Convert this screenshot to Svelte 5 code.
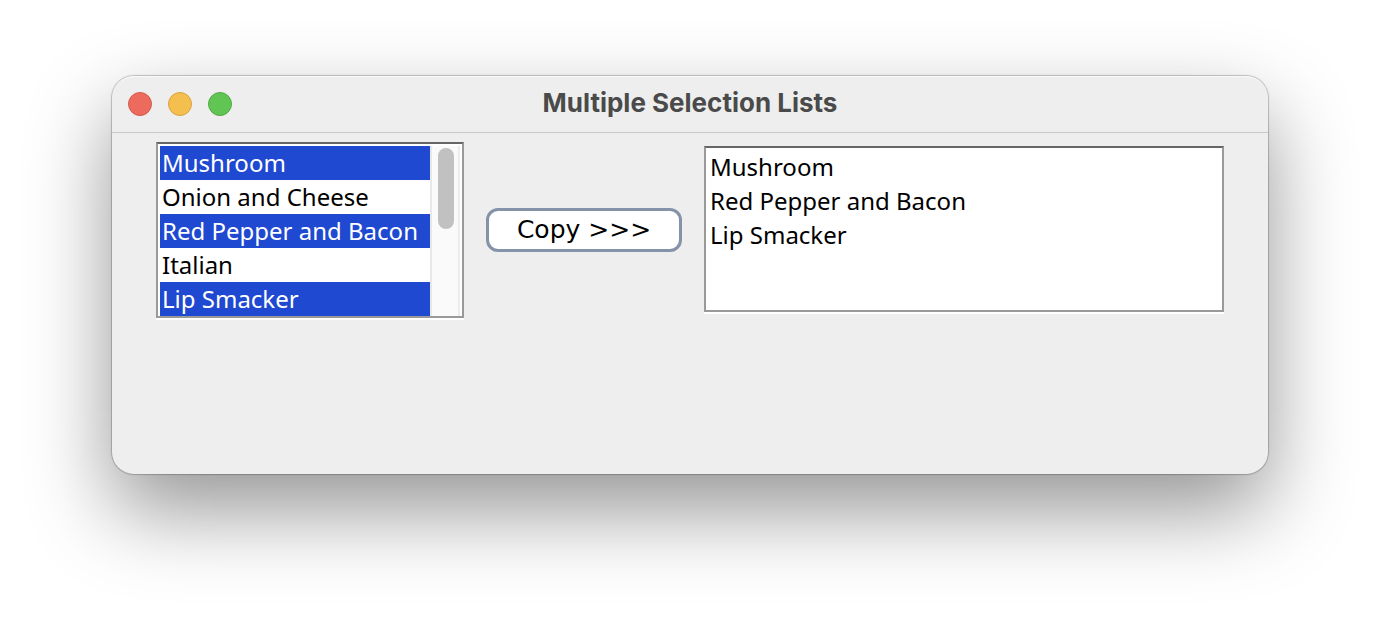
<script>
  const toppings = ['Mushroom', 'Onion and Cheese', 'Red Pepper and Bacon', 'Italian', 'Lip Smacker'];
  let chosen = $state(['Mushroom', 'Red Pepper and Bacon', 'Lip Smacker']);
  let copied = $state(['Mushroom', 'Red Pepper and Bacon', 'Lip Smacker']);

  function copy() {
    copied = toppings.filter((name) => chosen.includes(name));
  }
</script>

<main class="desktop">
  <section class="window">
    <header class="titlebar">
      <div class="lights">
        <button class="light close" aria-label="Close"></button>
        <button class="light minimise" aria-label="Minimise"></button>
        <button class="light zoom" aria-label="Zoom"></button>
      </div>
      <h1>Multiple Selection Lists</h1>
    </header>

    <div class="content">
      <div class="well source">
        <select multiple size="5" aria-label="Available" bind:value={chosen}>
          {#each toppings as name}
            <option value={name}>{name}</option>
          {/each}
        </select>
        <div class="track" aria-hidden="true"><div class="thumb"></div></div>
      </div>

      <button class="copy" onclick={copy}>Copy &gt;&gt;&gt;</button>

      <div class="well target">
        <select multiple size="5" aria-label="Copied">
          {#each copied as name}
            <option>{name}</option>
          {/each}
        </select>
      </div>
    </div>
  </section>
</main>

<style>
  :global(body) {
    margin: 0;
    background: #fff;
  }

  .desktop {
    box-sizing: border-box;
    min-height: 100vh;
    padding: 76px 112px 148px;
    overflow: hidden;
    display: flex;
  }

  .window {
    flex: 1;
    min-width: 0;
    border-radius: 22px;
    background: #eee;
    box-shadow:
      inset 0 2px 1px -1px #fafafa,
      0 0 1px 1px rgba(0, 0, 0, 0.22),
      0 36px 84px rgba(0, 0, 0, 0.42);
  }

  .titlebar {
    display: grid;
    grid-template-columns: 1fr auto 1fr;
    align-items: center;
    height: 56px;
    padding: 0 16px;
    border-bottom: 1px solid #c8c8c8;
  }

  .lights {
    display: flex;
    gap: 16px;
  }

  .light {
    width: 24px;
    height: 24px;
    padding: 0;
    border: 1px solid;
    border-radius: 50%;
  }

  .close {
    background: #ed6a5e;
    border-color: #d65a4f;
  }

  .minimise {
    background: #f5bf4f;
    border-color: #d9a23d;
  }

  .zoom {
    background: #61c554;
    border-color: #52a844;
  }

  h1 {
    margin: 0;
    padding-bottom: 2px;
    font: 700 26px/32px Inter, sans-serif;
    color: #4a4a4a;
  }

  .content {
    display: flex;
    justify-content: center;
    align-items: center;
    gap: 22px;
    padding: 9px 16px;
  }

  .well {
    box-sizing: border-box;
    display: flex;
    border: 2px solid #999;
    border-top-color: #666;
    background: #fff;
    box-shadow: 0 2px #fff;
  }

  .source {
    padding: 2px 2px 0;
  }

  .target {
    width: 520px;
    height: 166px;
    margin-bottom: 2px;
    padding: 2px;
  }

  select {
    box-sizing: border-box;
    height: 170px;
    margin: 0;
    padding: 0;
    border: 0;
    border-radius: 0;
    outline: 0;
    background: #fff;
    font: 24px/34px "Noto Sans", sans-serif;
    color: #000;
    overflow-y: auto;
    scrollbar-width: none;
  }

  .source select {
    width: 270px;
  }

  .target select {
    width: 100%;
    height: 100%;
  }

  option {
    box-sizing: border-box;
    height: 34px;
    min-height: 34px;
    padding: 0 2px;
    line-height: 34px;
    white-space: nowrap;
  }

  option:checked {
    background: linear-gradient(#1f49d1, #1f49d1);
    -webkit-text-fill-color: #fff;
  }

  .track {
    box-sizing: border-box;
    width: 30px;
    padding: 2px 4px 0 6px;
    border-left: 2px solid #e8e8e8;
    border-right: 2px solid #ececec;
    background: #fafafa;
  }

  .thumb {
    width: 16px;
    height: 81px;
    border-radius: 8px;
    background: #c1c1c1;
  }

  .copy {
    box-sizing: border-box;
    width: 196px;
    height: 44px;
    padding: 0;
    border: 3px solid #8593a9;
    border-radius: 12px;
    background: #fff;
    font: 25px/32px "DejaVu Sans", sans-serif;
    color: #000;
  }
</style>
